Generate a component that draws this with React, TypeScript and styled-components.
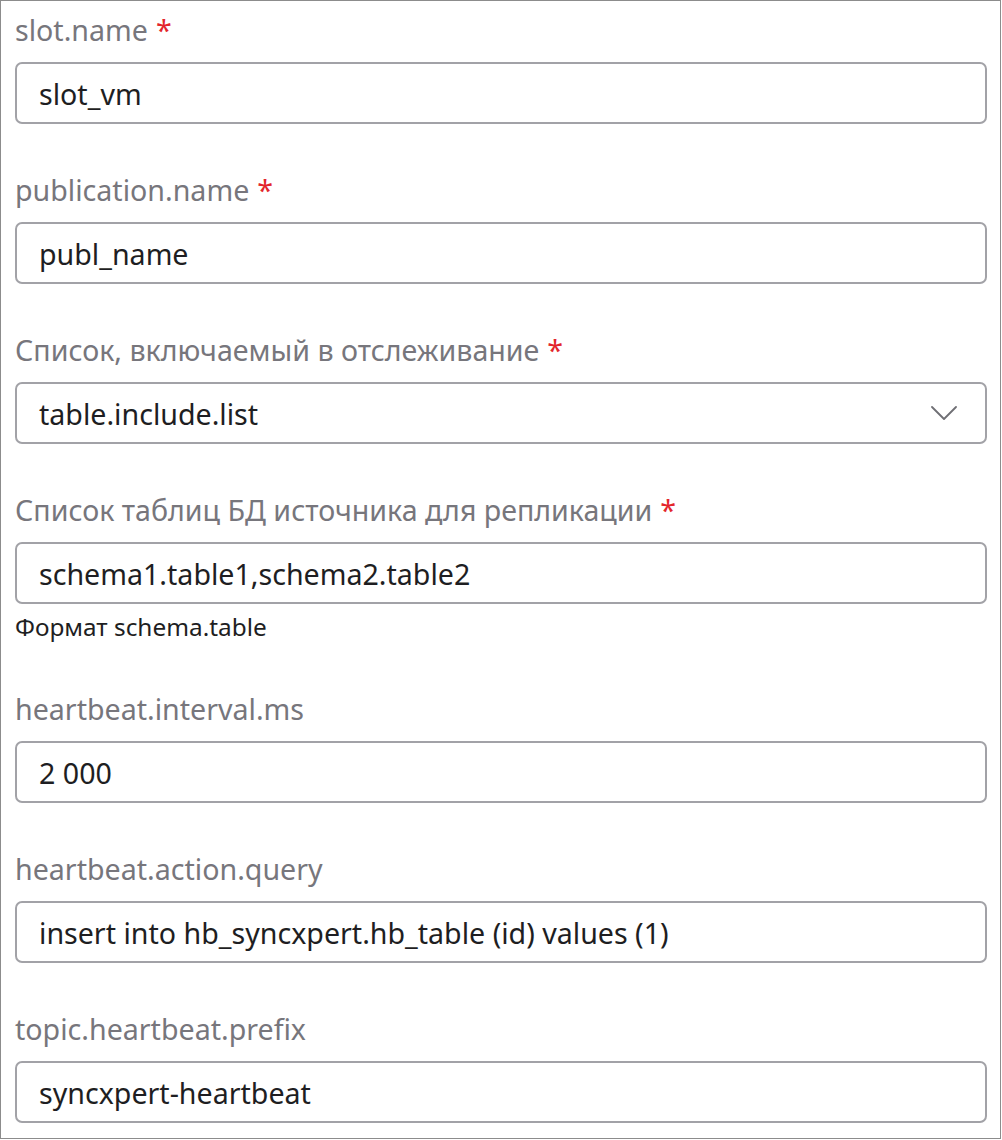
import React from "react";
import styled, { createGlobalStyle } from "styled-components";

const GlobalStyle = createGlobalStyle`
  html, body {
    margin: 0;
    padding: 0;
    background: #ffffff;
  }
  body {
    font-family: "Noto Sans", "Open Sans", sans-serif;
  }
  * { box-sizing: border-box; }
`;

const Frame = styled.div`
  width: 1001px;
  height: 1139px;
  border: 1px solid #8c8c8c;
  background: #ffffff;
  padding: 10px 13px 0 14px;
  display: flex;
  flex-direction: column;
  gap: 47px;
`;

const Field = styled.div`
  display: flex;
  flex-direction: column;
`;

const Label = styled.div`
  font-size: 28.6px;
  line-height: 38px;
  color: #77767c;
  margin-bottom: 13px;
  white-space: nowrap;
`;

const Required = styled.span`
  color: #e3262c;
  margin-left: 8px;
`;

const Box = styled.div`
  height: 62px;
  border: 2px solid #a2a2a7;
  border-radius: 7px;
  display: flex;
  align-items: center;
  justify-content: space-between;
  padding: 0 28px 0 22px;
  font-size: 28.6px;
  color: #1e1e22;
  white-space: nowrap;
`;

const Hint = styled.div`
  margin-top: 7px;
  font-size: 24.4px;
  line-height: 32px;
  color: #1e1e22;
`;

const Chevron = () => (
  <svg width="26" height="14" viewBox="0 0 26 14" fill="none">
    <path d="M1 1 L13 13 L25 1" stroke="#6f6f74" strokeWidth="1.8" strokeLinecap="round" strokeLinejoin="round" />
  </svg>
);

type FieldDef = {
  label: string;
  value: string;
  required?: boolean;
  select?: boolean;
  hint?: string;
};

const fields: FieldDef[] = [
  { label: "slot.name", value: "slot_vm", required: true },
  { label: "publication.name", value: "publ_name", required: true },
  { label: "Список, включаемый в отслеживание", value: "table.include.list", required: true, select: true },
  {
    label: "Список таблиц БД источника для репликации",
    value: "schema1.table1,schema2.table2",
    required: true,
    hint: "Формат schema.table",
  },
  { label: "heartbeat.interval.ms", value: "2 000" },
  { label: "heartbeat.action.query", value: "insert into hb_syncxpert.hb_table (id) values (1)" },
  { label: "topic.heartbeat.prefix", value: "syncxpert-heartbeat" },
];

export default function App() {
  return (
    <>
      <GlobalStyle />
      <Frame>
        {fields.map((f) => (
          <Field key={f.label}>
            <Label>
              {f.label}
              {f.required && <Required>*</Required>}
            </Label>
            <Box>
              <span>{f.value}</span>
              {f.select && <Chevron />}
            </Box>
            {f.hint && <Hint>{f.hint}</Hint>}
          </Field>
        ))}
      </Frame>
    </>
  );
}
